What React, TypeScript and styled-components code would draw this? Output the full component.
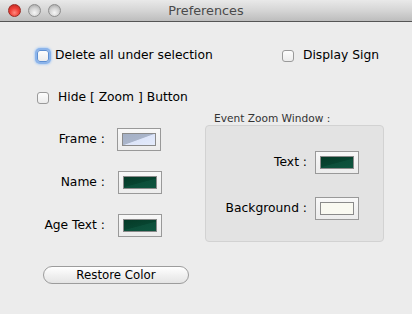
import React from 'react';
import styled, { createGlobalStyle } from 'styled-components';

const GlobalStyle = createGlobalStyle`
  html, body {
    margin: 0;
    padding: 0;
    background: #ececec;
  }
  body {
    font-family: "DejaVu Sans", "Liberation Sans", sans-serif;
    font-size: 12.3px;
    color: #000;
  }
`;

type Swatch = 'frame' | 'green' | 'cream';

const swatchFill: Record<Swatch, string> = {
  frame: 'linear-gradient(160deg, #a3afc5 0%, #aab5ca 48%, #dde5f9 52%, #e4ebfb 100%)',
  green: 'linear-gradient(165deg, #053a27 0%, #074430 50%, #0c4f3a 54%, #0e553f 100%)',
  cream: '#f9f9f1',
};

const App: React.FC = () => {
  return (
    <>
      <GlobalStyle />
      <Window>
        <TitleBar>
          <Lights>
            <Light $color="red" />
            <Light $color="gray" />
            <Light $color="gray" />
          </Lights>
          <Title>Preferences</Title>
        </TitleBar>

        <Content>
          <TopRow>
            <CheckLabel>
              <Box $focused />
              <span>Delete all under selection</span>
            </CheckLabel>
            <CheckLabel $gap={9}>
              <Box />
              <span>Display Sign</span>
            </CheckLabel>
          </TopRow>

          <HideRow>
            <CheckLabel $gap={9}>
              <Box />
              <span>Hide [ Zoom ] Button</span>
            </CheckLabel>
          </HideRow>

          <Columns>
            <ColorGrid>
              <FieldLabel>Frame :</FieldLabel>
              <Well $shift={-1}>
                <WellFill $swatch="frame" />
              </Well>
              <FieldLabel>Name :</FieldLabel>
              <Well>
                <WellFill $swatch="green" />
              </Well>
              <FieldLabel>Age Text :</FieldLabel>
              <Well>
                <WellFill $swatch="green" />
              </Well>
            </ColorGrid>

            <Group>
              <GroupTitle>Event Zoom Window :</GroupTitle>
              <GroupBox>
                <GroupGrid>
                  <FieldLabel>Text :</FieldLabel>
                  <Well>
                    <WellFill $swatch="green" />
                  </Well>
                  <FieldLabel>Background :</FieldLabel>
                  <Well>
                    <WellFill $swatch="cream" />
                  </Well>
                </GroupGrid>
              </GroupBox>
            </Group>
          </Columns>

          <Footer>
            <PillButton>Restore Color</PillButton>
          </Footer>
        </Content>
      </Window>
    </>
  );
};

// Styled Components
const Window = styled.div`
  width: 412px;
  height: 314px;
  background: #ececec;
  display: flex;
  flex-direction: column;
  overflow: hidden;
`;

const TitleBar = styled.div`
  height: 21px;
  flex-shrink: 0;
  display: flex;
  align-items: center;
  position: relative;
  background: linear-gradient(#e9e9e9, #d5d5d5 50%, #bdbdbd);
  border-bottom: 1px solid #555;
`;

const Lights = styled.div`
  display: flex;
  gap: 7px;
  padding-left: 8px;
`;

const Light = styled.span<{ $color: 'red' | 'gray' }>`
  width: 13px;
  height: 13px;
  border-radius: 50%;
  box-sizing: border-box;
  border: 1px solid ${({ $color }) => ($color === 'red' ? '#9b2a23' : '#8e8e8e')};
  background: ${({ $color }) =>
    $color === 'red'
      ? 'radial-gradient(circle at 50% 70%, #ff8a80 0%, #f0423a 45%, #b5241c 100%)'
      : 'radial-gradient(circle at 50% 70%, #f6f6f6 0%, #d2d2d2 50%, #9c9c9c 100%)'};
`;

const Title = styled.div`
  position: absolute;
  left: 0;
  right: 0;
  text-align: center;
  font-size: 12.8px;
  color: #4a4a4a;
  pointer-events: none;
`;

const Content = styled.div`
  flex: 1;
  display: flex;
  flex-direction: column;
  padding: 26px 33px 0 37px;
`;

const TopRow = styled.div`
  display: flex;
  justify-content: space-between;
  align-items: center;
  height: 15px;
`;

const HideRow = styled.div`
  display: flex;
  height: 15px;
  margin-top: 27px;
`;

const CheckLabel = styled.label<{ $gap?: number }>`
  display: flex;
  align-items: center;
  gap: ${({ $gap }) => $gap ?? 6}px;
  line-height: 15px;
`;

const Box = styled.span<{ $focused?: boolean }>`
  width: 12px;
  height: 12px;
  box-sizing: border-box;
  border-radius: 3px;
  border: 1px solid ${({ $focused }) => ($focused ? '#5d8fd2' : '#9a9a9a')};
  background: linear-gradient(#fdfdfd, #ececec);
  box-shadow: ${({ $focused }) => ($focused ? '0 0 0 2px #8cb4ea, 0 0 2px 3px #b9d3f3' : 'none')};
`;

const Columns = styled.div`
  display: flex;
  align-items: flex-start;
  margin-top: 6px;
`;

const ColorGrid = styled.div`
  display: grid;
  grid-template-columns: 68px 44px;
  grid-auto-rows: 23px;
  column-gap: 13px;
  row-gap: 20px;
  align-items: center;
  padding-top: 17px;
`;

const FieldLabel = styled.span`
  white-space: nowrap;
  justify-self: end;
  line-height: 15px;
`;

const Well = styled.div<{ $shift?: number }>`
  width: 44px;
  height: 23px;
  box-sizing: border-box;
  border: 1px solid #999;
  background: linear-gradient(#f8f8f8, #ececec);
  padding: 4px;
  margin-left: ${({ $shift }) => $shift ?? 0}px;
`;

const WellFill = styled.div<{ $swatch: Swatch }>`
  height: 100%;
  box-sizing: border-box;
  border: 1px solid #8a8a8a;
  background: ${({ $swatch }) => swatchFill[$swatch]};
`;

const Group = styled.div`
  display: flex;
  flex-direction: column;
  margin-left: 43px;
`;

const GroupTitle = styled.div`
  font-size: 10.6px;
  color: #333;
  padding-left: 9px;
  height: 14px;
  line-height: 14px;
`;

const GroupBox = styled.div`
  width: 179px;
  height: 117px;
  box-sizing: border-box;
  background: #e3e3e3;
  border: 1px solid #d2d2d2;
  border-radius: 4px;
  display: flex;
  justify-content: flex-end;
`;

const GroupGrid = styled.div`
  display: grid;
  grid-template-columns: auto 44px;
  grid-auto-rows: 23px;
  column-gap: 8px;
  row-gap: 23px;
  align-items: center;
  align-content: start;
  padding: 25px 24px 0 0;
`;

const Footer = styled.div`
  display: flex;
  margin-top: 24px;
  padding-left: 6px;
`;

const PillButton = styled.button`
  width: 146px;
  height: 18px;
  border-radius: 9px;
  border: 1px solid #9c9c9c;
  background: linear-gradient(#ffffff, #f1f1f1 50%, #e4e4e4);
  font-family: "DejaVu Sans", "Liberation Sans", sans-serif;
  font-size: 11.8px;
  color: #000;
  padding: 0;
  line-height: 16px;
`;

export default App;
